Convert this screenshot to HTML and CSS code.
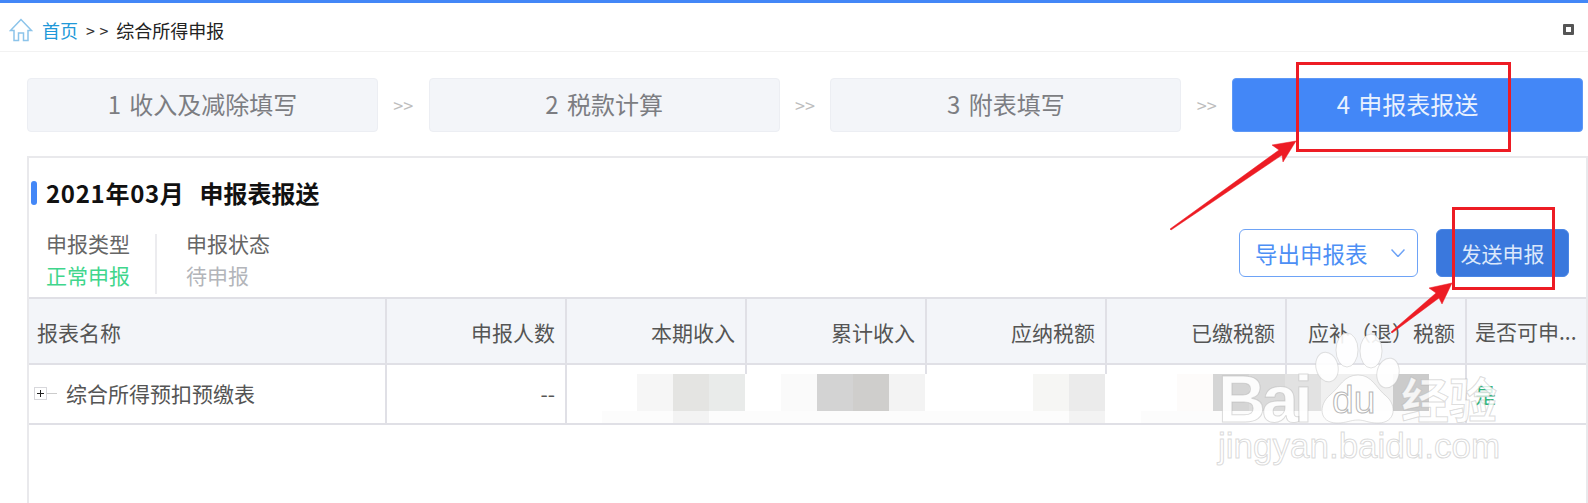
FILE: index.html
```html
<!DOCTYPE html>
<html lang="zh-CN">
<head>
<meta charset="utf-8">
<title>综合所得申报</title>
<link rel="stylesheet" href="styles.css">
</head>
<body>
<div class="page">
  <header class="crumb">
    <svg class="home" viewBox="0 0 24 24" width="24" height="24"><path d="M12 1.5 1.5 12.5H5V22.5H9.5V15H14.5V22.5H19V12.5H22.5Z"/></svg>
    <a class="crumb-link">首页</a>
    <span class="crumb-sep">&gt; &gt;</span>
    <span class="crumb-cur">综合所得申报</span>
    <span class="max-icon"></span>
  </header>

  <nav class="steps">
    <div class="step">1 收入及减除填写</div>
    <span class="step-sep">&gt;&gt;</span>
    <div class="step">2 税款计算</div>
    <span class="step-sep">&gt;&gt;</span>
    <div class="step">3 附表填写</div>
    <span class="step-sep">&gt;&gt;</span>
    <div class="step step-on">4 申报表报送</div>
  </nav>

  <section class="panel">
    <h1 class="title"><span class="title-a">2021年03月</span><span class="title-b">申报表报送</span></h1>
    <div class="bar">
      <div class="meta">
        <div class="meta-item">
          <div class="meta-k">申报类型</div>
          <div class="meta-ok">正常申报</div>
        </div>
        <div class="meta-item meta-second">
          <div class="meta-k">申报状态</div>
          <div class="meta-wait">待申报</div>
        </div>
      </div>
      <div class="actions">
        <button class="btn-out">导出申报表<svg class="chev" viewBox="0 0 14 8" width="14" height="8"><path d="M.5.5 7 7.5 13.5.5"/></svg></button>
        <button class="btn-send">发送申报</button>
      </div>
    </div>
    <div class="table">
      <div class="th first">报表名称</div>
      <div class="th">申报人数</div>
      <div class="th">本期收入</div>
      <div class="th">累计收入</div>
      <div class="th">应纳税额</div>
      <div class="th">已缴税额</div>
      <div class="th th-tc">应补（退）税额</div>
      <div class="th last">是否可申...</div>

      <div class="td first"><span class="tree"><span class="plus"></span><span class="dash"></span></span>综合所得预扣预缴表</div>
      <div class="td">--</div>
      <div class="td"></div>
      <div class="td"></div>
      <div class="td"></div>
      <div class="td"></div>
      <div class="td"></div>
      <div class="td last yes">是</div>
      <div class="mosaic"></div>
    </div>
  </section>

  <svg class="marks" viewBox="0 0 1588 503" width="1588" height="503">
    <g class="paw">
      <ellipse cx="1327" cy="367" rx="11" ry="15" transform="rotate(-14 1327 367)"/>
      <ellipse cx="1347" cy="350" rx="11" ry="17"/>
      <ellipse cx="1371" cy="351" rx="11" ry="17"/>
      <ellipse cx="1388" cy="373" rx="11" ry="15" transform="rotate(12 1388 373)"/>
      <path d="M1358 375C1372 375 1376 388 1386 396 1397 405 1396 423 1378 423 1368 423 1365 420 1358 420 1350 420 1347 423 1337 423 1319 423 1318 405 1330 395 1340 387 1344 375 1358 375Z"/>
    </g>
    <text class="wm wm-bai" x="1218" y="422">Bai</text>
    <text class="wm-du" x="1332" y="413">du</text>
    <text class="wm wm-cn" x="1401" y="418">经验</text>
    <text class="wm wm-url" x="1218" y="458">jingyan.baidu.com</text>

    <rect class="box" x="1297.5" y="63.5" width="212" height="87"/>
    <rect class="box" x="1453.5" y="208.5" width="100" height="80"/>
    <path class="arrow" d="M1170 229 1171 230 1282 155 1283 162 1296 141 1272 145 1279 150Z"/>
    <path class="arrow" d="M1391 332 1392 333 1439 298 1442 304 1452 283 1429 288 1436 293Z"/>
  </svg>
</div>
</body>
</html>
```

FILE: styles.css
```css
* { box-sizing: border-box; }
html, body { margin: 0; padding: 0; background: #fff; }
body { font-family: "Noto Sans CJK SC", "Noto Sans", sans-serif; color: #333; }

.page {
  position: relative;
  width: 1588px;
  height: 503px;
  overflow: hidden;
  border-top: 3px solid #4387f7;
}

.crumb {
  display: flex;
  align-items: center;
  height: 49px;
  padding: 5px 14px 0 9px;
  border-bottom: 1px solid #f2f2f2;
  font-size: 18px;
}
.home { fill: none; stroke: #8cc4ea; stroke-width: 1.5; flex: none; }
.crumb-link { margin-left: 9px; color: #2098d8; }
.crumb-sep { margin-left: 8px; font-size: 16px; word-spacing: 1px; color: #333; }
.crumb-cur { margin-left: 8px; color: #222; }
.max-icon {
  margin-left: auto;
  width: 11px;
  height: 11px;
  border: 3px solid #555;
  background: #fff;
  border-radius: 1px;
}

.steps {
  display: flex;
  align-items: center;
  height: 54px;
  margin-top: 26px;
  padding: 0 5px 0 27px;
}
.step {
  flex: 0 0 351px;
  height: 54px;
  display: flex;
  align-items: center;
  justify-content: center;
  padding-bottom: 3px;
  background: #f3f5f9;
  border: 1px solid #eceef3;
  border-radius: 4px;
  font-size: 24px;
  word-spacing: 3px;
  color: #7c7d82;
}
.step-on { background: #4387f7; border-color: #5d98f7; color: #e9f1fe; }
.step-sep {
  flex: 1;
  text-align: center;
  font-size: 18px;
  color: #bdbdbd;
}

.panel {
  height: 347px;
  margin: 24px 0 0 27px;
  border: 2px solid #e9e9ec;
  border-bottom: 0;
}
.title {
  display: flex;
  align-items: center;
  height: 32px;
  margin: 18px 0 0;
  padding-left: 17px;
  font-size: 24px;
  font-weight: 700;
  color: #111;
  position: relative;
}
.title::before {
  content: "";
  position: absolute;
  left: 2px;
  top: 5px;
  width: 6px;
  height: 24px;
  border-radius: 3px;
  background: #4387f7;
}
.title-a { letter-spacing: .7px; }
.title-b { margin-left: 15px; }

.bar {
  display: flex;
  justify-content: space-between;
  height: 89px;
}
.meta { display: flex; padding: 19px 0 0 17px; }
.meta-item { font-size: 21px; line-height: 32px; }
.meta-second {
  margin-left: 25px;
  padding-left: 29px;
  border-left: 2px solid #ececef;
  height: 60px;
  margin-top: 7px;
}
.meta-second .meta-k { margin-top: -7px; }
.meta-k { color: #666; }
.meta-ok { color: #3fd68c; }
.meta-wait { color: #b3b5ba; }

.actions {
  display: flex;
  gap: 18px;
  padding: 21px 17px 0 0;
  height: 69px;
  box-sizing: content-box;
}
.btn-out, .btn-send {
  height: 48px;
  font-family: inherit;
  font-size: 21px;
  border-radius: 6px;
  padding: 0;
}
.btn-out {
  display: flex;
  align-items: center;
  width: 179px;
  padding-left: 15px;
  background: #fff;
  border: 1.5px solid #6ea3f6;
  font-size: 22.5px;
  color: #4d8ff5;
}
.chev { margin-left: 23px; fill: none; stroke: #6ea3f6; stroke-width: 1.5; }
.btn-send {
  width: 133px;
  background: #3a78dd;
  border: 1px solid #4a86e6;
  color: #dce8fb;
}

.table {
  position: relative;
  display: grid;
  grid-template-columns: 358px repeat(6, 180px) 1fr;
  grid-template-rows: 66px 60px;
  border-top: 2px solid #e0e0e6;
}
.th, .td {
  display: flex;
  align-items: center;
  justify-content: flex-end;
  padding: 0 10px 0 0;
  font-size: 21px;
  border-right: 2px solid #e0e0e6;
  border-bottom: 2px solid #e0e0e6;
  white-space: nowrap;
}
.th { background: #f3f5f9; color: #555; padding-top: 1px; }
.th-tc { font-family: "Noto Sans CJK TC", sans-serif; }
.td { color: #555; padding-bottom: 2px; }
.first { justify-content: flex-start; padding-left: 8px; }
.last { justify-content: flex-start; padding: 0 0 0 8px; border-right: 0; }
.yes { color: #2fb57c; }
.tree { display: inline-flex; align-items: center; margin: 0 9px 0 -3px; }
.plus {
  position: relative;
  width: 13px;
  height: 13px;
  border: 1px solid #d8d8dc;
  background:
    linear-gradient(#222, #222) center / 7px 1px no-repeat,
    linear-gradient(#222, #222) center / 1px 7px no-repeat;
}
.dash { width: 10px; height: 1px; background: #ccc; }

.mosaic {
  position: absolute;
  left: 573px;
  top: 75px;
  width: 827px;
  height: 49px;
  background:
    linear-gradient(90deg,
      #fff 0 35px, #f6f6f6 35px 71px, #e4e4e2 71px 107px, #e9ebea 107px 143px,
      #fff 143px 179px, #fafafa 179px 215px, #d3d3d3 215px 251px, #cfcecc 251px 287px,
      #f3f3f3 287px 323px, #fff 323px 431px, #f6f6f4 431px 467px, #ebebeb 467px 503px,
      #fff 503px 575px, #fdfbfa 575px 611px, #d5d5d5 611px 647px, #dbdbdb 647px 683px,
      #e2e2e2 683px 719px, #f0f0f0 719px 791px, #cbcbcb 791px 827px) top / 100% 37px no-repeat,
    linear-gradient(90deg,
      #fcfcfc 0 71px, #f3f3f3 71px 107px, #fcfcfc 107px 467px, #f3f3f3 467px 503px,
      #fff 503px 539px, #fcfcfc 539px 827px) bottom / 100% 12px no-repeat;
}

.marks { position: absolute; left: 0; top: -3px; pointer-events: none; }
.box { fill: none; stroke: #ed1c24; stroke-width: 3; }
.arrow { fill: #ed1c24; stroke: #ed1c24; stroke-width: .5; stroke-linejoin: round; }
.paw { fill: #fff; fill-opacity: .9; stroke: #bdbdbd; stroke-opacity: .45; stroke-width: 1; }
.wm {
  font-family: "Liberation Sans", sans-serif;
  font-weight: 700;
  fill: #fff;
  fill-opacity: .92;
  stroke: #a8a8a8;
  stroke-opacity: .4;
  stroke-width: 1;
}
.wm-bai { font-size: 66px; letter-spacing: -4px; }
.wm-du { font-family: "Liberation Sans", sans-serif; font-size: 39px; fill: #fff; stroke: #b5b5b5; stroke-width: 1; }
.wm-cn { font-family: "Noto Sans CJK SC", sans-serif; font-size: 48px; fill-opacity: .82; }
.wm-url { font-size: 35px; font-weight: 400; stroke: #bbb; stroke-opacity: .55; }
```
